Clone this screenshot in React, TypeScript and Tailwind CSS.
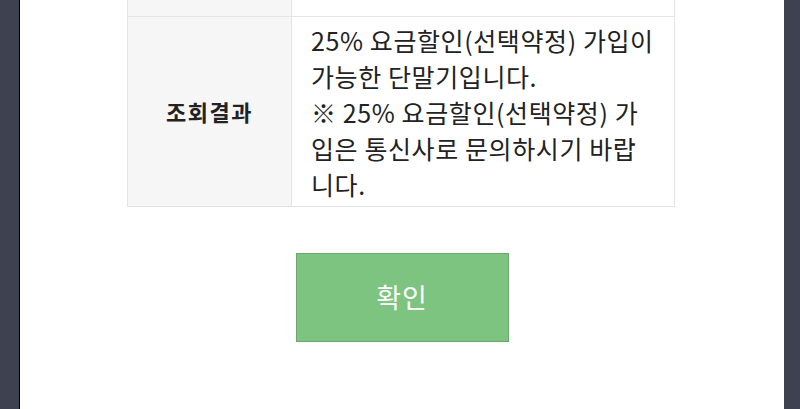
import React from "react";

export default function App() {
  return (
    <div
      className="w-[800px] h-[409px] bg-[#3d4150] flex overflow-hidden"
      style={{ fontFamily: '"Noto Sans CJK KR", "Noto Sans", sans-serif' }}
    >
      <div className="w-[19px] shrink-0" />
      <div className="w-px bg-black shrink-0" />
      <div className="w-[764px] shrink-0 bg-white flex flex-col items-center">
        <div className="w-[548px] ml-[-2px] border-x border-b border-[#e4e4e4] flex flex-col">
          <div className="flex h-[17px] border-b border-[#e4e4e4]">
            <div className="w-[164px] bg-[#f6f6f6] border-r border-[#e4e4e4]" />
            <div className="flex-1" />
          </div>
          <div className="flex">
            <div className="w-[164px] bg-[#f6f6f6] border-r border-[#e4e4e4] flex items-center justify-center">
              <span className="text-[22px] font-bold text-[#222] tracking-[1.5px]">조회결과</span>
            </div>
            <div className="flex-1 pl-[19px] pr-[18px] pt-[5px] pb-[4px] text-[25px] tracking-[0.6px] leading-[36px] text-[#222]">
              25% 요금할인(선택약정) 가입이 가능한 단말기입니다.
              <br />※ 25% 요금할인(선택약정) 가입은 통신사로 문의하시기 바랍니다.
            </div>
          </div>
        </div>
        <button className="mt-[46px] w-[213px] h-[89px] bg-[#7dc480] border border-[#6ca86e] text-white text-[27px] tracking-[1px] flex items-center justify-center">
          확인
        </button>
      </div>
    </div>
  );
}
